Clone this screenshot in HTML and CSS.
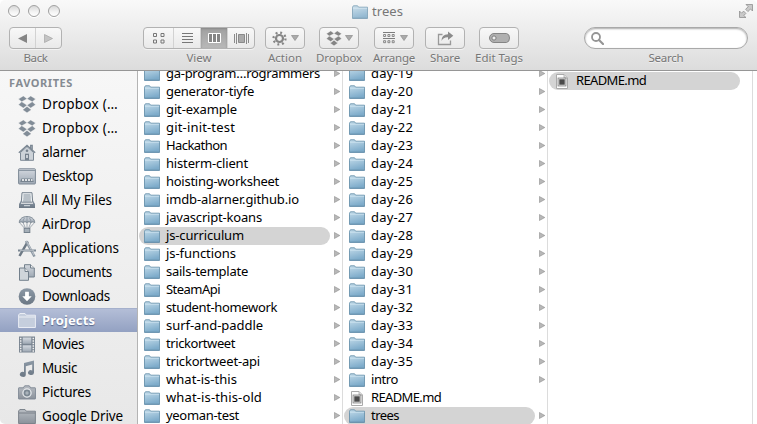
FILE: index.html
```
<!DOCTYPE html>
<html lang="en">
<head>
<meta charset="utf-8">
<title>trees</title>
<link rel="stylesheet" href="styles.css">
</head>
<body>
<svg class="defs" width="0" height="0">
  <defs>
    <linearGradient id="blue" x1="0" y1="0" x2="0.3" y2="1"><stop offset="0" stop-color="#c4dcea"/><stop offset="1" stop-color="#7dabca"/></linearGradient>
    <linearGradient id="slate" x1="0" y1="0" x2="0" y2="1"><stop offset="0" stop-color="#8c99a6"/><stop offset="1" stop-color="#6b7784"/></linearGradient>
    <linearGradient id="pale" x1="0" y1="0" x2="0" y2="1"><stop offset="0" stop-color="#d3d8df"/><stop offset="1" stop-color="#9fa9b4"/></linearGradient>
    <linearGradient id="grey" x1="0" y1="0" x2="0" y2="1"><stop offset="0" stop-color="#b8bdc3"/><stop offset="1" stop-color="#8b929b"/></linearGradient>
  </defs>
  <symbol id="folder" viewBox="0 0 16 14"><path d="M.5 13.2V2.200L1.400.8H5.600l1 1.400h8.900v11z" fill="url(#blue)" stroke="#6a93ad" stroke-width=".9"/><path d="M.8 3.300h14.400" stroke="#d7e9f3" stroke-width=".6"/><path d="M.3 13.400h15.400" stroke="#5b88a7" stroke-width=".7"/></symbol>
  <symbol id="file" viewBox="0 0 12 15"><path d="M.5.5h7.500l3.500 3.500v10.500H.5z" fill="#fdfdfd" stroke="#aaa"/><path d="M8 .5V4h3.500" fill="#ddd" stroke="#aaa" stroke-width=".8"/><rect x="2" y="4" width="8" height="8" fill="#dcdcdc" stroke="#777" stroke-width=".7"/><rect x="3.300" y="5.300" width="5.400" height="5.400" fill="#4a4a4a"/></symbol>
  <symbol id="dropbox" viewBox="0 0 18 17"><path d="M5.300 0L.5 3l3.200 2.800L9 2.800zM12.700 0l4.800 3-3.200 2.800L9 2.800zM.5 8.800l3.200-3L9 9.200 5.300 12zM17.500 8.800l-3.200-3L9 9.200l3.700 2.800zM5 13l.5.2L9 10.400l3.500 2.800.5-.2v1L9 16.800 5 14z" stroke="#f3f3f3" stroke-width=".35"/></symbol>
  <symbol id="home" viewBox="0 0 18 17"><path d="M2.500 8.500V16.300h13V8.500L9 2.500z" fill="#ccd2d8" stroke="#7c8894"/><path d="M.8 8.800L9 1.300l8.200 7.500M14.200 5.500V1.300h-1.500V4" fill="none" stroke="#7b8793" stroke-width="1.300"/><circle cx="9" cy="6.800" r="1.300" fill="#75818d"/><rect x="7" y="9.700" width="4" height="6.500" fill="#75818d"/><rect x="8.200" y="11" width="1.600" height="3" fill="#dfe3e7"/></symbol>
  <symbol id="desktop" viewBox="0 0 18 17"><rect x=".6" y=".8" width="16.800" height="15.200" rx=".7" fill="url(#pale)" stroke="#7c8894"/><path d="M.8 2.500h16.400" stroke="#8b97a3"/><path d="M3.500 10.500h11l1.300 3.500H2.200z" fill="#77838f"/><path d="M4 12h2m1 0h2m1 0h2m1 0h1.500" stroke="#fff" stroke-width="1.700"/></symbol>
  <symbol id="allfiles" viewBox="0 0 18 17"><path d="M4 .7h10l.7 9.500H3.300z" fill="#edf0f2" stroke="#76828e"/><path d="M5.500 3h7M5.500 5h7.300M5.300 7h7.500M5 9h8" stroke="#83909c"/><path d="M3 8.500L1 12v4h16v-4l-2-3.500v3.200H3z" fill="url(#slate)"/><path d="M6 13.700h6" stroke="#dbe0e4"/></symbol>
  <symbol id="airdrop" viewBox="0 0 18 18"><path d="M.8 7C1 2.800 4.500.6 9 .6s8 2.200 8.200 6.400c-1.700-1-2.800-1-4 0-1.400-1.200-2.800-1.200-4.200 0-1.400-1.200-2.800-1.200-4.200 0C3.600 6 2.500 6 .8 7z" fill="url(#pale)" stroke="#707d89" stroke-width=".9"/><path d="M1.500 7.500L6.500 13M4.900 7l2.500 6M9 7v6M13.100 7l-2.500 6M16.500 7.500L11.500 13M6.500 2Q4.500 4 4.800 7M11.500 2q2 2 1.700 5M9 1v6" fill="none" stroke="#7c8995" stroke-width=".7"/><rect x="6" y="13" width="6" height="4.500" fill="#a5afb8" stroke="#707c88"/></symbol>
  <symbol id="apps" viewBox="0 0 18 17"><path d="M1.500 16L9.800 1.500" stroke="#6d7985" stroke-width="2.500"/><path d="M8 1l8.500 15.500" stroke="#8c98a3" stroke-width="2.500"/><path d="M8.500 1.200L16 15" stroke="#d4d9de" stroke-width=".7"/><path d="M0 10.500h18" stroke="#7b8793" stroke-width="2"/><path d="M2 10.300h14" stroke="#d5dadf" stroke-width=".7"/></symbol>
  <symbol id="docs" viewBox="0 0 18 17"><path d="M6.500.7h6L16.300 4v9H6.500z" fill="url(#pale)" stroke="#73808c"/><path d="M12.500.7V4h3.800" fill="#eee" stroke="#73808c"/><path d="M1.500 4h5.600l3.400 3.500v8.800h-9z" fill="#cfd5da" stroke="#73808c"/><path d="M7 4v3.500h3.500" fill="#eee" stroke="#73808c"/></symbol>
  <symbol id="downloads" viewBox="0 0 18 18"><circle cx="9" cy="9" r="8.800" fill="url(#slate)"/><path d="M7 4h4v4.800h3L9 14 4 8.800h3z" fill="#fff"/></symbol>
  <symbol id="sfolder" viewBox="0 0 18 16"><path d="M.6 15V2.500L1.800 1H7l1.300 1.700h9.100V15z" stroke-width=".9"/><path d="M1 4.500h16" stroke-width=".9"/></symbol>
  <symbol id="movies" viewBox="0 0 18 17"><rect x="1" y=".5" width="16" height="16" fill="#7a8591"/><rect x="4.700" y="1.500" width="8.600" height="6.300" fill="url(#pale)"/><rect x="4.700" y="9.300" width="8.600" height="6.300" fill="url(#pale)"/><path d="M2.700 1.700v14M15.300 1.700v14" stroke="#f2f2f2" stroke-width="1.500" stroke-dasharray="1.500 1"/></symbol>
  <symbol id="music" viewBox="0 0 18 17"><path d="M6 3L16 .5v12.200a3 2.400 0 1 1-1.800-2.300V4.600L7.800 6.200v8.200A3 2.500 0 1 1 6 12.100z" fill="url(#slate)"/></symbol>
  <symbol id="camera" viewBox="0 0 18 15"><path d="M1 2.800h4.300L6.700.8h4.600l1.400 2H17q.6 0 .6.600V13.400q0 .6-.6.600H1q-.6 0-.6-.6V3.400q0-.6.600-.6z" fill="url(#grey)" stroke="#7a8591" stroke-width=".9"/><circle cx="9" cy="8" r="4.100" fill="#7b8792" stroke="#e8ebee" stroke-width="1.300"/><circle cx="9" cy="8" r="1.700" fill="#aab3bb"/></symbol>
  <symbol id="tri" viewBox="0 0 6 7"><path d="M.4.500L5.800 3.500.4 6.500z" fill="#b8b8b8" stroke="#8d8d8d" stroke-width=".6"/></symbol>
</svg>

<div class="window">
  <header class="chrome">
    <div class="titlebar">
      <div class="lights"><i></i><i></i><i></i></div>
      <div class="title"><svg class="folder"><use href="#folder"/></svg><span data-w="31">trees</span></div>
      <svg class="full" width="16" height="16" viewBox="0 0 16 16"><path d="M8 1.500h6.500V8l-2-2-2.600 2.600-2.300-2.300L10.200 3.700zM1.500 8v6.500H8l-2.200-2 2.100-2.100-2.300-2.300L3.500 10.200z" fill="#c9c9c9" stroke="#919191" stroke-width=".8"/></svg>
    </div>
    <div class="toolbar">
      <div class="tool back"><div class="btn split">
        <span><svg width="9" height="9"><path d="M9 0v9L0 4.500z" fill="#858585"/></svg></span><span><svg width="9" height="9"><path d="M.5.500v8l8-4z" fill="#c4c4c4" stroke="#a5a5a5" stroke-width=".7"/></svg></span>
      </div><b data-w="24">Back</b></div>
      <div class="tool view"><div class="btn split">
        <span><svg width="12" height="11" fill="none" stroke="#777"><path d="M.5.500h3v3h-3zM8 .5h3v3H8zM.5 7h3v3h-3zM8 7h3v3H8z"/></svg></span>
        <span><svg width="11" height="11" stroke="#777"><path d="M0 .5h11M0 3.500h11M0 6.500h11M0 9.500h11"/></svg></span>
        <span class="on"><svg width="15" height="12"><path d="M1.500 1.500h12v9h-12z" fill="#858585" stroke="#fff"/><path d="M5.500 1v10M9.500 1v10" stroke="#fff"/></svg></span>
        <span><svg width="15" height="11"><path d="M.5 1v9M2.500 0v11M12.500 0v11M14.500 1v9" stroke="#8a8a8a"/><path d="M4.500 1.500h6v8h-6z" fill="#aaa" stroke="#8a8a8a"/></svg></span>
      </div><b data-w="25">View</b></div>
      <div class="tool action"><div class="btn drop">
        <svg width="15" height="15" viewBox="0 0 15 15"><circle cx="7.500" cy="7.500" r="3.500" fill="none" stroke="#858585" stroke-width="2.200"/><circle cx="7.500" cy="7.500" r="6" fill="none" stroke="#858585" stroke-width="2.200" stroke-dasharray="1.900 2.812"/></svg><svg class="arrow" width="8" height="6"><path d="M.5.500h7L4 5.500z" fill="#aaa" stroke="#8d8d8d" stroke-width=".7"/></svg>
      </div><b data-w="34">Action</b></div>
      <div class="tool box"><div class="btn drop">
        <svg width="16" height="15" fill="#858585"><use href="#dropbox"/></svg><svg class="arrow" width="8" height="6"><path d="M.5.500h7L4 5.500z" fill="#aaa" stroke="#8d8d8d" stroke-width=".7"/></svg>
      </div><b data-w="46">Dropbox</b></div>
      <div class="tool arrange"><div class="btn drop">
        <svg width="12" height="12" fill="none" stroke="#7d7d7d"><path d="M0 .5h12M0 6.500h12"/><path d="M.6 2.500h2v2h-2zM4.900 2.500h2v2h-2zM9.200 2.500h2v2h-2zM.6 8.700h2v2h-2zM4.900 8.700h2v2h-2zM9.200 8.700h2v2h-2z" stroke-width=".9"/></svg><svg class="arrow" width="8" height="6"><path d="M.5.500h7L4 5.500z" fill="#aaa" stroke="#8d8d8d" stroke-width=".7"/></svg>
      </div><b data-w="42">Arrange</b></div>
      <div class="tool share"><div class="btn">
        <svg width="17" height="15" viewBox="0 0 17 15"><path d="M5.500 3.500h-4v10h12v-4" fill="none" stroke="#999" stroke-width="1.300"/><path d="M4.500 10Q4.500 3.300 11 3.300V.6L16.300 4.800 11 9V6.300Q6.500 6 4.500 10z" fill="#8b8b8b"/></svg>
      </div><b data-w="30">Share</b></div>
      <div class="tool tags"><div class="btn">
        <svg width="21" height="10" viewBox="0 0 21 10"><path d="M5 .5h12.500q3 .5 3 4.500t-3 4.500H5A4.500 4.500 0 0 1 5 .5z" fill="#b0b0b0" stroke="#858585"/><circle cx="5" cy="5" r="2.100" fill="#eee" stroke="#808080"/></svg>
      </div><b data-w="48">Edit Tags</b></div>
      <div class="tool search"><div class="field"><svg width="13" height="13"><circle cx="5" cy="5" r="4" fill="none" stroke="#959595" stroke-width="1.800"/><path d="M8 8l4 4" stroke="#959595" stroke-width="2.200" stroke-linecap="round"/></svg></div><b data-w="35">Search</b></div>
    </div>
  </header>
  <main class="body">
    <nav class="sidebar">
      <h2><span data-w="64">FAVORITES</span></h2>
      <div class="item"><svg class="slate"><use href="#dropbox"/></svg><span data-w="76">Dropbox (…</span></div>
      <div class="item"><svg class="slate"><use href="#dropbox"/></svg><span data-w="76">Dropbox (…</span></div>
      <div class="item"><svg><use href="#home"/></svg><span data-w="44">alarner</span></div>
      <div class="item"><svg><use href="#desktop"/></svg><span data-w="51">Desktop</span></div>
      <div class="item"><svg><use href="#allfiles"/></svg><span data-w="70">All My Files</span></div>
      <div class="item"><svg><use href="#airdrop"/></svg><span data-w="49">AirDrop</span></div>
      <div class="item"><svg><use href="#apps"/></svg><span data-w="77">Applications</span></div>
      <div class="item"><svg><use href="#docs"/></svg><span data-w="70">Documents</span></div>
      <div class="item"><svg><use href="#downloads"/></svg><span data-w="68">Downloads</span></div>
      <div class="item current"><svg class="light"><use href="#sfolder"/></svg><span data-w="53">Projects</span></div>
      <div class="item"><svg><use href="#movies"/></svg><span data-w="42">Movies</span></div>
      <div class="item"><svg><use href="#music"/></svg><span data-w="35">Music</span></div>
      <div class="item"><svg><use href="#camera"/></svg><span data-w="49">Pictures</span></div>
      <div class="item"><svg class="dark"><use href="#sfolder"/></svg><span data-w="81">Google Drive</span></div>
    </nav>
    <section class="column" id="projects"></section>
    <section class="column" id="curriculum"></section>
    <section class="column last" id="trees"></section>
  </main>
</div>
<script src="main.js"></script>
</body>
</html>
```
FILE: styles.css
```
* { box-sizing: border-box; }
body { margin: 0; background: #fff; font-family: "Lucida Grande", "Noto Sans", "Open Sans", sans-serif; font-size: 13px; color: #000; overflow: hidden; }
svg { display: block; flex: none; }
.defs { position: absolute; }
.window { width: 757px; height: 424px; display: flex; flex-direction: column; overflow: hidden; border-radius: 5px 5px 0 5px; }
.chrome { height: 71px; flex: none; border-bottom: 1px solid #969696; background: linear-gradient(#f9f9f9, #ececec 45%, #dcdcdc); }
.titlebar { height: 27px; display: flex; justify-content: space-between; align-items: flex-start; padding: 0 3px 0 8px; }
.lights { display: flex; gap: 8px; padding-top: 5px; width: 72px; }
.lights i { width: 12px; height: 12px; border-radius: 50%; border: 1px solid #a0a0a0; background: linear-gradient(#d8d8d8, #f4f4f4 60%, #fff); box-shadow: 0 1px 0 #fff; }
.title { display: flex; align-items: center; gap: 4px; height: 23px; color: #777; font-size: 13px; margin-left: 31px; }
.title span { margin-top: -2px; }
.title .folder { opacity: .8; }
.folder { width: 16px; height: 14px; }
.full { width: 16px; height: 16px; margin: 3px 0 0 94px; }
.toolbar { display: flex; padding-left: 9px; }
.tool { display: flex; flex-direction: column; align-items: center; width: 40px; }
.tool b { font-weight: 400; font-size: 11.5px; line-height: 16px; margin-top: 1px; color: #777; white-space: nowrap; text-shadow: 0 1px 0 #fff8; }
.btn { width: 100%; height: 22px; border: 1px solid #b2b2b2; border-radius: 4px; background: linear-gradient(#f8f8f8, #e9e9e9); display: flex; align-items: center; justify-content: center; box-shadow: 0 1px 0 #fff8; }
.split span { flex: 1; height: 100%; display: flex; align-items: center; justify-content: center; }
.split span + span { border-left: 1px solid #d2d2d2; }
.view .split span:first-child { flex: 0 0 29px; padding-left: 1px; }
.split .on { background: linear-gradient(#a0a0a0, #b8b8b8); box-shadow: inset 0 1px 2px #888; }
.drop { justify-content: space-between; padding: 0 5px 0 6px; }
.back { width: 53px; }
.view { width: 112px; margin-left: 81px; }
.action { margin-left: 10px; }
.box { margin-left: 14px; }
.arrange { margin-left: 15px; }
.arrange .drop { padding-left: 8px; }
.share { margin-left: 11px; }
.tags { margin-left: 14px; }
.search { width: 164px; margin-left: 65px; }
.field { width: 100%; height: 22px; border: 1px solid #a9a9a9; border-radius: 11px; background: #fff; box-shadow: inset 0 1px 2px #aaa; padding: 4px 0 0 6px; }
.body { flex: 1; min-height: 0; display: flex; }
.sidebar { width: 138px; flex: none; border-right: 1px solid #b4b4b4; background: linear-gradient(#f7f7f7, #e8e8e8); overflow: hidden; }
.sidebar h2 { margin: 0; padding-left: 9px; height: 21px; font-size: 11px; line-height: 24px; color: #858b92; font-weight: 700; }
.item { height: 24px; display: flex; align-items: center; gap: 6px; padding-left: 18px; white-space: nowrap; font-size: 13.5px; }
.item svg { width: 18px; height: 17px; }
.slate { fill: #818c97; }
.dark { fill: url(#grey); stroke: #747c84; }
.light { fill: #c5cedd; stroke: #eff2f7; }
.current { background: linear-gradient(#b5bfd8, #93a1c2); box-shadow: inset 0 1px #a5b0cc; color: #fff; font-weight: 700; font-size: 13px; text-shadow: 0 1px 1px #5a678a; }
.column { width: 205px; flex: none; border-right: 1px solid #dcdcdc; padding-left: 1px; overflow: hidden; }
.column .rows { margin-top: -6px; }
.last .rows { margin-top: 1px; }
.row { height: 18px; display: flex; align-items: center; }
.pill { width: 191px; height: 18px; border-radius: 9px; padding-left: 5px; display: flex; align-items: center; gap: 6px; white-space: nowrap; line-height: 18px; }
.pill span { margin-top: -2px; }
.row.sel .pill { background: #d4d4d4; }
.icon { width: 16px; display: flex; justify-content: center; }
.file { width: 12px; height: 15px; }
.tri { width: 6px; height: 7px; margin: -2px 0 0 4px; }
```
FILE: main.js
```
// Each entry: label, label width in px, kind
const projects = [
  ["ga-program…rogrammers", 154], ["generator-tiyfe", 88], ["git-example", 71],
  ["git-init-test", 69], ["Hackathon", 61], ["histerm-client", 82],
  ["hoisting-worksheet", 113], ["imdb-alarner.github.io", 133], ["javascript-koans", 96],
  ["js-curriculum", 78, "sel"], ["js-functions", 70], ["sails-template", 82],
  ["SteamApi", 54], ["student-homework", 111], ["surf-and-paddle", 97],
  ["trickortweet", 69], ["trickortweet-api", 94], ["what-is-this", 71],
  ["what-is-this-old", 96], ["yeoman-test", 73]
];
const curriculum = [];
for (let d = 19; d <= 35; d++) curriculum.push(["day-" + d, 42]);
curriculum.push(["intro", 27], ["README.md", 70, "file"], ["trees", 28, "sel"]);
const trees = [["README.md", 70, "file sel"]];

function render(id, list) {
  const rows = list.map(([name, w, kind = ""]) => {
    const isFile = kind.includes("file");
    const icon = isFile ? "file" : "folder";
    const tri = isFile ? "" : '<svg class="tri"><use href="#tri"/></svg>';
    return `<div class="row ${kind.includes("sel") ? "sel" : ""}"><div class="pill"><div class="icon"><svg class="${icon}"><use href="#${icon}"/></svg></div><span data-w="${w}">${name}</span></div>${tri}</div>`;
  });
  document.getElementById(id).innerHTML = `<div class="rows">${rows.join("")}</div>`;
}
render("projects", projects);
render("curriculum", curriculum);
render("trees", trees);

// Track each label to its set width
document.querySelectorAll("[data-w]").forEach(el => {
  const extra = (+el.dataset.w - el.getBoundingClientRect().width) / el.textContent.length;
  el.style.letterSpacing = extra.toFixed(3) + "px";
});
```
